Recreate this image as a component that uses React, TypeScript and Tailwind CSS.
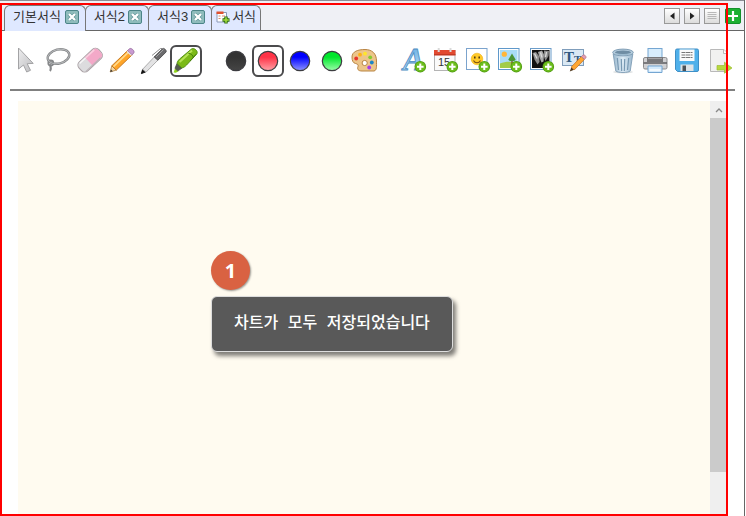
import { useState } from "react"
import type { ReactNode } from "react"
import { clsx } from "clsx"

const tabs = [
  { id: 1, label: "기본서식" },
  { id: 2, label: "서식2" },
  { id: 3, label: "서식3" },
]

const colors = [
  { name: "black", from: "#333333", to: "#454545" },
  { name: "red", from: "#ff3347", to: "#ffa3a8" },
  { name: "blue", from: "#0000ff", to: "#8f96ff" },
  { name: "green", from: "#00e62c", to: "#9dffab" },
]

function PlusBadge() {
  return (
    <g>
      <circle cx="22.3" cy="21.7" r="5.8" fill="#4f9a12" />
      <circle cx="22.3" cy="21.7" r="5" fill="#6cbd1c" />
      <path d="M22.3 18.4v6.6M19 21.7h6.6" stroke="#fff" strokeWidth="2" />
    </g>
  )
}

function Icon({ children }: { children: ReactNode }) {
  return (
    <svg viewBox="0 0 32 32" className="block size-8 overflow-visible" aria-hidden="true">
      {children}
    </svg>
  )
}

const drawTools = [
  {
    id: "select",
    label: "선택",
    icon: (
      <Icon>
        <path
          d="M8.5 3v21l5-4 3.2 7 3.8-1.700-3.300-6.600 6-.3z"
          fill="url(#silver)"
          stroke="#a3a3a5"
          strokeLinejoin="round"
        />
      </Icon>
    ),
  },
  {
    id: "lasso",
    label: "올가미",
    icon: (
      <Icon>
        <g fill="none" stroke="#858789">
          <ellipse cx="16.5" cy="11.5" rx="11" ry="7" transform="rotate(-14 16.5 11.5)" strokeWidth="2.4" />
          <circle cx="8.8" cy="18" r="2.5" strokeWidth="1.8" />
          <path d="M9 19.5c-2 2 1.500 3.500-1 6.500" strokeWidth="2.2" />
        </g>
        <ellipse
          cx="16.5"
          cy="11.5"
          rx="11"
          ry="7"
          transform="rotate(-14 16.5 11.5)"
          fill="none"
          stroke="#c0c2c4"
          strokeWidth=".8"
        />
      </Icon>
    ),
  },
  {
    id: "eraser",
    label: "지우개",
    icon: (
      <Icon>
        <g transform="rotate(-43 16 15)">
          <rect x="2.5" y="9" width="27" height="12.5" rx="4.5" fill="#dcdcde" stroke="#a9a0a4" />
          <path d="M14 9.5h11a4 4 0 0 1 4 4v3.5a4 4 0 0 1-4 4H14z" fill="#f3a9c8" />
          <path d="M6 10.5h8" stroke="#f7f7f7" strokeWidth="1.5" />
          <path d="M14 10.5h12" stroke="#fad0e0" strokeWidth="1.5" />
          <path d="M5 20.5h20" stroke="#b9b2b6" />
        </g>
      </Icon>
    ),
  },
  {
    id: "pencil",
    label: "연필",
    icon: (
      <Icon>
        <path d="M4.2 27l1.6-6.2 4.5 4.3z" fill="#f3d6a4" stroke="#a5722c" strokeWidth=".7" />
        <path d="M4.2 27l.7-2.5 1.9 1.8z" fill="#333" />
        <path d="M5.8 20.8L21.6 5.6l4.5 4.3-15.8 15.2z" fill="#ffa528" stroke="#c0711a" strokeWidth=".9" />
        <path d="M7.5 21.6L22.3 7.3" stroke="#ffd98a" strokeWidth="1.6" />
        <path d="M21.6 5.6l2-2c1.6-1 5.4 2.2 4.3 4.2l-1.8 2.1z" fill="#c89ad2" stroke="#94699b" strokeWidth=".8" />
        <path d="M21 6.2l4.5 4.3" stroke="#e4e0e8" strokeWidth="1.2" />
      </Icon>
    ),
  },
  {
    id: "pen",
    label: "펜",
    icon: (
      <Icon>
        <path d="M3.4 28.6l1.2-4 2.8 2.4z" fill="#111" stroke="#111" />
        <path d="M4.6 24.3L16.8 11.4l3.6 3.2L8 27.2z" fill="#e3e3e4" stroke="#9a9a9b" strokeWidth=".8" />
        <path d="M16.2 12L24.6 3.6c1.2-1 4.5 1.8 3.4 3.5L19.9 15.2z" fill="#6b6b6d" stroke="#4a4a4b" strokeWidth=".9" />
        <path d="M18.2 11.8l7.4-7.3" stroke="#a6a6a8" />
        <path d="M14 10.5l8.5-7h3" fill="none" stroke="#8b8b8d" />
      </Icon>
    ),
  },
  {
    id: "highlighter",
    label: "형광펜",
    icon: (
      <Icon>
        <path d="M3.6 27.4l1.4-4 3.4 2.8-2.6 1.5z" fill="#8ed31c" />
        <path d="M5 23.2l2-4.8 5 4.7-4.2 3z" fill="#555c50" stroke="#3d4239" strokeWidth=".7" />
        <path
          d="M7 18.6c.2-1.8 1-3 2.6-4.6L21.5 4c2.3-1.6 6.9 1.7 5.4 4.8L16.6 20c-1.5 1.6-3 2.6-4.8 3z"
          fill="#7cba18"
          stroke="#4b8a0b"
          strokeWidth=".9"
        />
        <path d="M9.6 17L22 5.6" stroke="#b6e356" strokeWidth="2" />
        <path d="M18.5 8.5c2.2-.4 4.8 2 4.8 4.2M20 16L26 9.3" fill="none" stroke="#457f0a" />
      </Icon>
    ),
  },
]

const insertTools = [
  {
    id: "text",
    label: "글자 추가",
    icon: (
      <Icon>
        <text
          x="5"
          y="25"
          fontSize="32"
          fontWeight="bold"
          fontStyle="italic"
          fontFamily="Liberation Serif, serif"
          fill="url(#sky)"
          stroke="#4d8cc2"
          strokeWidth=".8"
        >
          A
        </text>
        <PlusBadge />
      </Icon>
    ),
  },
  {
    id: "date",
    label: "날짜 추가",
    icon: (
      <Icon>
        <rect x="4.5" y="5.5" width="20.5" height="20" fill="#fafafa" stroke="#b4b4b4" />
        <path d="M4 5h21.5v5.3H4z" fill="#e2492f" />
        <path d="M4 9.8h21.5" stroke="#b5341f" />
        <path d="M8.7 3v4M20.5 3v4" stroke="#d9d9d9" strokeWidth="2" />
        <text x="8" y="21.3" fontSize="11" fontFamily="Liberation Sans, sans-serif" fill="#333">
          15
        </text>
        <PlusBadge />
      </Icon>
    ),
  },
  {
    id: "sticker",
    label: "스티커 추가",
    icon: (
      <Icon>
        <rect x="4.5" y="3.5" width="20.5" height="21" fill="#fff" stroke="#7ba3cd" />
        <circle cx="15" cy="14" r="5.8" fill="#ffc928" stroke="#efb01a" strokeWidth=".6" />
        <path d="M12.8 11.5v2M17.2 11.5v2" stroke="#4a3510" strokeWidth="1.5" />
        <path d="M11.5 15.5c1.5 3 5.5 3 7 0" fill="none" stroke="#7a5212" strokeWidth="1.1" />
        <PlusBadge />
      </Icon>
    ),
  },
  {
    id: "picture",
    label: "그림 추가",
    icon: (
      <Icon>
        <rect x="4.5" y="3.5" width="20.5" height="21" fill="#fff" stroke="#5f98ca" />
        <path d="M6 5h17.5v18H6z" fill="#a9dcf8" />
        <path d="M6 18.5c6-2.4 12-2.4 17.5 0V23H6z" fill="#a2cc48" />
        <circle cx="10.3" cy="9.2" r="2.6" fill="#ffb63a" />
        <path d="M18 13v6.5" stroke="#7c5b2b" strokeWidth="1.4" />
        <path d="M18 8.5l3.6 6c.2 2-7.4 2-7.2 0z" fill="#4b9436" />
        <PlusBadge />
      </Icon>
    ),
  },
  {
    id: "xray",
    label: "방사선 사진 추가",
    icon: (
      <Icon>
        <rect x="4.5" y="3.5" width="20.5" height="21" fill="#fff" stroke="#6b9cc9" />
        <path d="M6 5h17.5v18H6z" fill="#111" />
        <path d="M6.500 8l3.500-1 3 4 .5 6-2 2.500-3-5z" fill="#8e8e8e" />
        <path d="M12 7l4-1.500 2 4-.5 7-2 1-2-5z" fill="#a9a9a9" />
        <path d="M18 5.500l5 .5-.5 5-3 5-1.500-4z" fill="#8a8a8a" />
        <path d="M8.500 8.500l2.500 5M14.500 7.500l1.500 5M20.500 7l-1 5" stroke="#dcdcdc" strokeWidth="1.300" />
        <PlusBadge />
      </Icon>
    ),
  },
  {
    id: "textbox",
    label: "글상자 편집",
    icon: (
      <Icon>
        <rect x="4.5" y="4.5" width="21" height="16" fill="#d9e8f4" stroke="#7f9dbb" />
        <g fontFamily="Liberation Serif, serif" fontWeight="bold" fill="#2f587f">
          <text x="6" y="17" fontSize="15">
            T
          </text>
          <text x="16" y="17.5" fontSize="11">
            T
          </text>
        </g>
        <path d="M11.8 26.4l1.6-4.3 2.7 2.6z" fill="#51391e" />
        <path d="M13.2 22L23.4 11.6l3 2.8L16.2 25z" fill="#ffa733" stroke="#bb6f1f" strokeWidth=".7" />
        <path d="M23.4 11.6l1.6-1.7c1.3-.6 3.5 1.3 3 2.8l-1.600 1.700z" fill="#e59db0" stroke="#a9758a" strokeWidth=".7" />
      </Icon>
    ),
  },
]

const fileTools = [
  {
    id: "delete",
    label: "삭제",
    icon: (
      <Icon>
        <ellipse cx="16" cy="27" rx="10" ry="1.4" fill="#dde0e2" />
        <path d="M6.200 9h19.600l-2.600 17c-1.500 2-12.900 2-14.400 0z" fill="url(#bin)" stroke="#7f9db5" strokeWidth=".9" />
        <path d="M10.300 13l1.200 12M14.300 14l.4 12M17.700 14l-.4 12M21.700 13l-1.200 12" stroke="#7798b2" strokeWidth="1.200" />
        <ellipse cx="16" cy="7.500" rx="10.300" ry="3.400" fill="#b7cedf" stroke="#7f9db5" />
        <ellipse cx="16" cy="7.500" rx="8" ry="2.100" fill="#6f8da4" />
        <path d="M9 8.500c3 1.400 11 1.400 14 0" stroke="#9dbbd0" fill="none" />
      </Icon>
    ),
  },
  {
    id: "print",
    label: "인쇄",
    icon: (
      <Icon>
        <rect x="9" y="3.500" width="14" height="11" fill="#d8edfc" stroke="#75a6d2" />
        <rect x="4.500" y="12.500" width="23.500" height="11.500" rx="1.500" fill="#d0d0d2" stroke="#8b8b8d" />
        <path d="M8 12h16v5H8z" fill="#77777a" />
        <path d="M9 13.500h14" stroke="#a3a3a6" />
        <path d="M4.500 18h23.500" stroke="#5e5e61" strokeWidth="1.500" />
        <path d="M9 21h14v6.500H9z" fill="#d4eafc" stroke="#75a6d2" />
        <path d="M10.500 25h11" stroke="#fff" strokeWidth="1.500" />
      </Icon>
    ),
  },
  {
    id: "save",
    label: "저장",
    icon: (
      <Icon>
        <path d="M4.500 5.500a1.500 1.500 0 0 1 1.500-1.500h20a1.500 1.500 0 0 1 1.500 1.500v19.500a1.500 1.500 0 0 1-1.500 1.500H6.500l-2-2z" fill="#4fb0ea" stroke="#3f8fc6" />
        <path d="M8.500 4.500h15v11.500h-15z" fill="#fafafa" />
        <path d="M10.500 7.500h11M10.500 10h11M10.500 12.500h11" stroke="#777" strokeDasharray="4 .5" />
        <path d="M9.500 19.500h13V26h-13z" fill="#dfe3e6" />
        <path d="M11.500 20.500h3.500V26h-3.500z" fill="#4c5257" />
      </Icon>
    ),
  },
  {
    id: "export",
    label: "내보내기",
    icon: (
      <Icon>
        <path d="M7.500 4.500h13.500l3 3V26.500H7.500z" fill="#f1f1f0" stroke="#b9b9b9" />
        <path d="M20.500 4.500v4h3.500" fill="#fff" stroke="#b9b9b9" />
        <path d="M14 20.500h7.500v-3.300l7.500 5.800-7.500 5.200v-3.200H14z" fill="#b8d83f" stroke="#9bbc32" strokeWidth=".7" />
      </Icon>
    ),
  },
]

function PaletteIcon() {
  return (
    <Icon>
      <path
        d="M4 12C4 6.500 10 4.500 17 4.500c7 0 11.500 4 11.500 11.500 0 5 .5 9.500-2.500 10H14c-4 0-5-2-4-4.500.6-1.800-.5-2.500-2.500-3C5 18 4 15.500 4 12z"
        fill="#ecc58a"
        stroke="#b98443"
      />
      <circle cx="16.700" cy="18" r="2.600" fill="#fff" stroke="#b98443" />
      <circle cx="8.200" cy="13.500" r="1.900" fill="#e8342a" />
      <circle cx="12" cy="9.700" r="1.900" fill="#ffb116" />
      <circle cx="17" cy="8.700" r="1.900" fill="#ffe62a" />
      <circle cx="22.200" cy="12.300" r="1.900" fill="#84cc2e" />
      <circle cx="23.800" cy="17.500" r="1.900" fill="#1b86c8" />
      <circle cx="21.200" cy="22.500" r="1.900" fill="#a43bea" />
    </Icon>
  )
}

type ToolButtonProps = {
  label: string
  active?: boolean
  onClick?: () => void
  children: ReactNode
}

function ToolButton({ label, active, onClick, children }: ToolButtonProps) {
  return (
    <button type="button" aria-label={label} aria-pressed={active} onClick={onClick} className="relative size-8 shrink-0">
      {children}
      {active && <span className="absolute inset-0 rounded-md border-2 border-[#4b4b4d]" />}
    </button>
  )
}

function StripButton({ label, children }: { label: string; children: ReactNode }) {
  return (
    <button
      type="button"
      aria-label={label}
      className="size-4 shrink-0 border border-[#999] bg-linear-to-b from-white to-[#dcdcdc]"
    >
      <svg viewBox="0 0 14 14" className="block w-full" aria-hidden="true">
        {children}
      </svg>
    </button>
  )
}

export default function App() {
  const [openTabs, setOpenTabs] = useState(tabs)
  const [activeTab, setActiveTab] = useState(1)
  const [tool, setTool] = useState("highlighter")
  const [color, setColor] = useState("red")

  return (
    <div className="relative h-screen overflow-hidden bg-white pr-px font-['Liberation_Sans','Noto_Sans_CJK_KR',sans-serif]">
      {/* Shared gradients */}
      <svg className="absolute size-0" aria-hidden="true">
        <defs>
          <linearGradient id="silver" x1="0" y1="0" x2="1" y2="1">
            <stop offset="0" stopColor="#ededee" />
            <stop offset="1" stopColor="#bdbdc0" />
          </linearGradient>
          <linearGradient id="sky" x1="0" y1="0" x2="0" y2="1">
            <stop offset="0" stopColor="#5fa8df" />
            <stop offset="1" stopColor="#c4e4fa" />
          </linearGradient>
          <linearGradient id="bin">
            <stop offset="0" stopColor="#9ab8ce" />
            <stop offset=".5" stopColor="#deecf6" />
            <stop offset="1" stopColor="#98b6cd" />
          </linearGradient>
          {colors.map((c) => (
            <linearGradient key={c.name} id={`dot-${c.name}`} x1="0" y1="0" x2="0" y2="1">
              <stop offset=".3" stopColor={c.from} />
              <stop offset="1" stopColor={c.to} />
            </linearGradient>
          ))}
        </defs>
      </svg>

      <div className="flex h-full flex-col border-r border-[#666]">
        {/* Tab strip */}
        <header className="flex h-[31px] shrink-0 items-end border-t border-b border-t-[#8d8d95] border-b-[#666] bg-[#eff0f5] pl-1">
          {openTabs.map((tab) => (
            <div
              key={tab.id}
              className={clsx(
                "-mr-px flex items-center rounded-t-md border border-b-0 border-[#777] bg-[#dfe8ff] pr-1.5 pl-2",
                activeTab === tab.id ? "relative -mb-px h-[26px] gap-1 pb-[3px]" : "h-[25px] gap-[3px] pb-0.5",
              )}
            >
              <button type="button" onClick={() => setActiveTab(tab.id)} className="text-[13px] leading-5 text-[#333]">
                {tab.label}
              </button>
              <button
                type="button"
                aria-label={`${tab.label} 닫기`}
                onClick={() => setOpenTabs((prev) => prev.filter((t) => t.id !== tab.id))}
              >
                <svg viewBox="0 0 14 14" className="block size-3.5" aria-hidden="true">
                  <rect x=".5" y=".5" width="13" height="13" rx="1.500" fill="#8fbcbc" stroke="#4c8588" />
                  <path d="M4 4l6 6M10 4l-6 6" stroke="#5f9497" strokeWidth="3.800" />
                  <path d="M4 4l6 6M10 4l-6 6" stroke="#fff" strokeWidth="2.400" />
                </svg>
              </button>
            </div>
          ))}
          <button
            type="button"
            className="flex h-[25px] items-center gap-0.5 rounded-t-md border border-b-0 border-[#777] bg-[#dfe8ff] px-1 pb-0.5 text-[13px] leading-5 text-[#333]"
          >
            <svg viewBox="0 0 14 14" className="size-3.5" aria-hidden="true">
              <path d="M1 2.500h9.500V12H1z" fill="#fff" stroke="#8a98b8" />
              <path d="M.5 1.500h7V4h-7z" fill="#e0512f" />
              <path d="M2.500 6h2M2.500 8.500h2M6 6h3" stroke="#d58c70" />
              <path d="M10 6.500v7M6.500 10h7" stroke="#2c6a12" strokeWidth="3.400" />
              <path d="M10 7.200v5.600M7.200 10h5.600" stroke="#a2dc3c" strokeWidth="1.600" />
            </svg>
            서식
          </button>

          <div className="ml-auto flex items-center gap-1 self-center pr-[3px]">
            <StripButton label="이전 탭">
              <path d="M9.500 3.500v7L5 7z" fill="#222" />
            </StripButton>
            <StripButton label="다음 탭">
              <path d="M5 3.500v7L9.500 7z" fill="#222" />
            </StripButton>
            <StripButton label="탭 목록">
              <path d="M2.500 3.500h9M2.500 5.500h9M2.500 7.500h9M2.500 9.500h9" stroke="#aaa" strokeWidth=".8" />
            </StripButton>
            <button type="button" aria-label="새 탭" className="ml-px size-4">
              <svg viewBox="0 0 16 16" className="block" aria-hidden="true">
                <rect x=".5" y=".5" width="15" height="15" rx="1.500" fill="#1cb032" stroke="#13902a" />
                <path d="M8 3v10M3 8h10" stroke="#fff" strokeWidth="2.200" />
              </svg>
            </button>
          </div>
        </header>

        {/* Toolbar */}
        <div role="toolbar" className="mr-[9px] ml-2.5 flex shrink-0 justify-between border-b-2 border-[#808080] pt-3.5 pb-3">
          <div className="flex gap-[18px]">
            <div className="flex">
              {drawTools.map((t) => (
                <ToolButton key={t.id} label={t.label} active={tool === t.id} onClick={() => setTool(t.id)}>
                  {t.icon}
                </ToolButton>
              ))}
            </div>
            <div className="flex">
              {colors.map((c) => (
                <ToolButton key={c.name} label={c.name} active={color === c.name} onClick={() => setColor(c.name)}>
                  <Icon>
                    <circle cx="16" cy="16" r="9.700" fill={`url(#dot-${c.name})`} stroke="#3c3c40" strokeWidth="1.200" />
                  </Icon>
                </ToolButton>
              ))}
              <ToolButton label="색상표">
                <PaletteIcon />
              </ToolButton>
            </div>
            <div className="flex">
              {insertTools.map((t) => (
                <ToolButton key={t.id} label={t.label}>
                  {t.icon}
                </ToolButton>
              ))}
            </div>
          </div>
          <div className="flex">
            {fileTools.map((t) => (
              <ToolButton key={t.id} label={t.label}>
                {t.icon}
              </ToolButton>
            ))}
          </div>
        </div>

        {/* Sheet */}
        <main className="mt-2.5 mr-4 ml-[18px] flex min-h-0 flex-1">
          <div className="relative flex-1 bg-[#fffbf0]">
            <div role="status" className="absolute top-[150px] left-[193px]">
              <span className="flex size-[39px] items-center justify-center rounded-full bg-[#d96242] font-['Open_Sans',sans-serif] text-xl font-bold text-white shadow-[1px_1px_2px_rgba(0,0,0,0.4)]">
                1
              </span>
              <p className="mt-1.5 rounded-md border border-[#ddd] bg-[#595959] px-[22px] py-[15px] font-['Liberation_Mono','Noto_Sans_CJK_KR',monospace] text-base font-medium whitespace-nowrap text-white shadow-[3px_4px_4px_rgba(0,0,0,0.5)]">
                차트가 모두 저장되었습니다
              </p>
            </div>
          </div>
          <div className="flex w-[18px] flex-col bg-[#efefef]">
            <button type="button" aria-label="위로" className="flex h-[17px] items-center justify-center">
              <svg viewBox="0 0 10 10" className="size-2.5" aria-hidden="true">
                <path d="M2 7l3-3 3 3" fill="none" stroke="#888" strokeWidth="1.300" />
              </svg>
            </button>
            <div className="min-h-0 flex-1">
              <div className="h-[89%] bg-[#cbcbcb]" />
            </div>
          </div>
        </main>
      </div>

      {/* Highlighted area */}
      <div className="pointer-events-none absolute top-[3px] right-[18px] bottom-0 left-0 border-2 border-[#ff0000]" />
    </div>
  )
}
